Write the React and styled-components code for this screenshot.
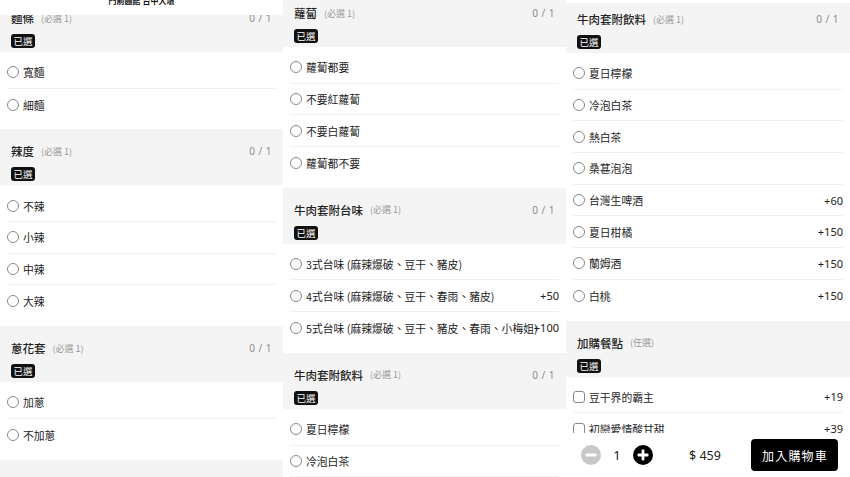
import React from 'react';
import styled, { createGlobalStyle } from 'styled-components';

const GlobalStyle = createGlobalStyle`
  html, body {
    margin: 0;
    padding: 0;
    background: #fff;
  }
  body {
    font-family: "Noto Sans CJK TC", "Noto Sans", sans-serif;
    color: #222;
  }
`;

const Screen = styled.div`
  display: grid;
  grid-template-columns: 283px 283px 284px;
  width: 850px;
  height: 477px;
  overflow: hidden;
`;

const Panel = styled.div`
  position: relative;
  height: 477px;
  overflow: hidden;
  background: #fff;
`;

const Scroller = styled.div`
  margin-top: ${(p) => p.$offset}px;
`;

const TopBar = styled.div`
  position: absolute;
  top: 0;
  left: 0;
  right: 0;
  height: ${(p) => p.$height}px;
  background: #fff;
  overflow: hidden;
  text-align: center;
  z-index: 2;
`;

const TopTitle = styled.div`
  margin-top: -4px;
  font-size: 8px;
  line-height: 9px;
  font-weight: 700;
  color: #111;
`;

const GroupHead = styled.div`
  background: #f4f4f4;
  height: 56px;
  box-sizing: border-box;
  padding: 14px 11px 7px;
`;

const HeadRow = styled.div`
  display: flex;
  align-items: center;
  height: 16px;
`;

const GroupTitle = styled.span`
  font-size: 11.5px;
  font-weight: 500;
  color: #222;
`;

const Rule = styled.span`
  margin-left: 7px;
  font-size: 9px;
  color: #999;
`;

const Count = styled.span`
  margin-left: auto;
  font-family: "Noto Sans", sans-serif;
  font-size: 10px;
  color: #8c8c8c;
  letter-spacing: 0.5px;
`;

const Badge = styled.span`
  display: inline-flex;
  align-items: center;
  margin-top: 5px;
  height: 14px;
  padding: 0 2.5px;
  border-radius: 3px;
  background: #111;
  color: #fff;
  font-size: 9.5px;
  line-height: 14px;
`;

const List = styled.div`
  padding: 5px 7px 9px;
`;

const Option = styled.div`
  display: flex;
  align-items: center;
  height: 30.7px;
  border-bottom: 1px solid #f0f0f0;

  &:last-child {
    border-bottom: none;
    height: 31.7px;
  }
`;

const Mark = styled.span`
  flex: none;
  width: 12px;
  height: 12px;
  border: 1px solid #888;
  border-radius: ${(p) => (p.$square ? '3px' : '50%')};
  box-sizing: border-box;
  margin-right: 4px;
`;

const Label = styled.span`
  flex: 1;
  min-width: 0;
  white-space: nowrap;
  font-size: 10.8px;
  line-height: 14px;
  color: #1e1e1e;
`;

const Price = styled.span`
  flex: none;
  font-family: "Noto Sans", sans-serif;
  font-size: 11px;
  color: #222;
`;

const Footer = styled.div`
  position: absolute;
  left: 0;
  right: 0;
  bottom: 0;
  height: 44px;
  background: #fff;
  display: flex;
  align-items: center;
  padding: 0 12px 0 15px;
  box-sizing: border-box;
  z-index: 2;
`;

const Stepper = styled.div`
  display: flex;
  align-items: center;
  gap: 12px;
`;

const Qty = styled.span`
  font-family: "Noto Sans", sans-serif;
  font-size: 13px;
  color: #222;
  width: 8px;
  text-align: center;
`;

const Total = styled.span`
  margin-left: 36px;
  font-family: "Noto Sans", sans-serif;
  font-size: 12.5px;
  color: #222;
`;

const CartButton = styled.button`
  margin-left: auto;
  width: 87px;
  height: 32px;
  border: none;
  border-radius: 4px;
  background: #000;
  color: #fff;
  font-family: "Noto Sans CJK TC", sans-serif;
  font-size: 12px;
  letter-spacing: 1.2px;
  padding: 0 0 0 1px;
`;

const MinusIcon = () => (
  <svg width="20" height="20" viewBox="0 0 20 20">
    <circle cx="10" cy="10" r="10" fill="#c8c8c8" />
    <rect x="4.5" y="8.6" width="11" height="2.8" rx="1" fill="#fff" />
  </svg>
);

const PlusIcon = () => (
  <svg width="20" height="20" viewBox="0 0 20 20">
    <circle cx="10" cy="10" r="10" fill="#000" />
    <rect x="4.5" y="8.6" width="11" height="2.8" rx="1" fill="#fff" />
    <rect x="8.6" y="4.5" width="2.8" height="11" rx="1" fill="#fff" />
  </svg>
);

const panels = [
  {
    offset: -4,
    top: { height: 15, title: '門前麵館 台中大墩' },
    groups: [
      { title: '麵條', rule: '(必選 1)', count: '0 / 1', items: [['寬麵'], ['細麵']] },
      { title: '辣度', rule: '(必選 1)', count: '0 / 1', items: [['不辣'], ['小辣'], ['中辣'], ['大辣']] },
      { title: '蔥花套', rule: '(必選 1)', count: '0 / 1', items: [['加蔥'], ['不加蔥']] },
      { title: '加點', rule: '(任選)', items: [['加麵'], ['加肉']] },
    ],
  },
  {
    offset: -9,
    groups: [
      {
        title: '蘿蔔',
        rule: '(必選 1)',
        count: '0 / 1',
        items: [['蘿蔔都要'], ['不要紅蘿蔔'], ['不要白蘿蔔'], ['蘿蔔都不要']],
      },
      {
        title: '牛肉套附台味',
        rule: '(必選 1)',
        count: '0 / 1',
        items: [
          ['3式台味 (麻辣爆破、豆干、豬皮)'],
          ['4式台味 (麻辣爆破、豆干、春雨、豬皮)', '+50'],
          ['5式台味 (麻辣爆破、豆干、豬皮、春雨、小梅姐)', '+100'],
        ],
      },
      {
        title: '牛肉套附飲料',
        rule: '(必選 1)',
        count: '0 / 1',
        items: [['夏日檸檬'], ['冷泡白茶'], ['熱白茶']],
      },
    ],
  },
  {
    offset: -3,
    top: { height: 3 },
    footer: true,
    groups: [
      {
        title: '牛肉套附飲料',
        rule: '(必選 1)',
        count: '0 / 1',
        items: [
          ['夏日檸檬'],
          ['冷泡白茶'],
          ['熱白茶'],
          ['桑葚泡泡'],
          ['台灣生啤酒', '+60'],
          ['夏日柑橘', '+150'],
          ['蘭姆酒', '+150'],
          ['白桃', '+150'],
        ],
      },
      {
        title: '加購餐點',
        rule: '(任選)',
        square: true,
        items: [['豆干界的霸主', '+19'], ['初戀愛情酸甘甜', '+39'], ['滷蛋', '+15']],
      },
    ],
  },
];

const Group = ({ group }) => (
  <section>
    <GroupHead>
      <HeadRow>
        <GroupTitle>{group.title}</GroupTitle>
        <Rule>{group.rule}</Rule>
        {group.count && <Count>{group.count}</Count>}
      </HeadRow>
      <Badge>已選</Badge>
    </GroupHead>
    <List>
      {group.items.map(([label, price]) => (
        <Option key={label}>
          <Mark $square={group.square} />
          <Label>{label}</Label>
          {price && <Price>{price}</Price>}
        </Option>
      ))}
    </List>
  </section>
);

const App = () => {
  return (
    <>
      <GlobalStyle />
      <Screen>
        {panels.map((panel, i) => (
          <Panel key={i}>
            {panel.top && (
              <TopBar $height={panel.top.height}>
                {panel.top.title && <TopTitle>{panel.top.title}</TopTitle>}
              </TopBar>
            )}
            <Scroller $offset={panel.offset}>
              {panel.groups.map((g) => (
                <Group key={g.title} group={g} />
              ))}
            </Scroller>
            {panel.footer && (
              <Footer>
                <Stepper>
                  <MinusIcon />
                  <Qty>1</Qty>
                  <PlusIcon />
                </Stepper>
                <Total>$ 459</Total>
                <CartButton>加入購物車</CartButton>
              </Footer>
            )}
          </Panel>
        ))}
      </Screen>
    </>
  );
};

export default App;
